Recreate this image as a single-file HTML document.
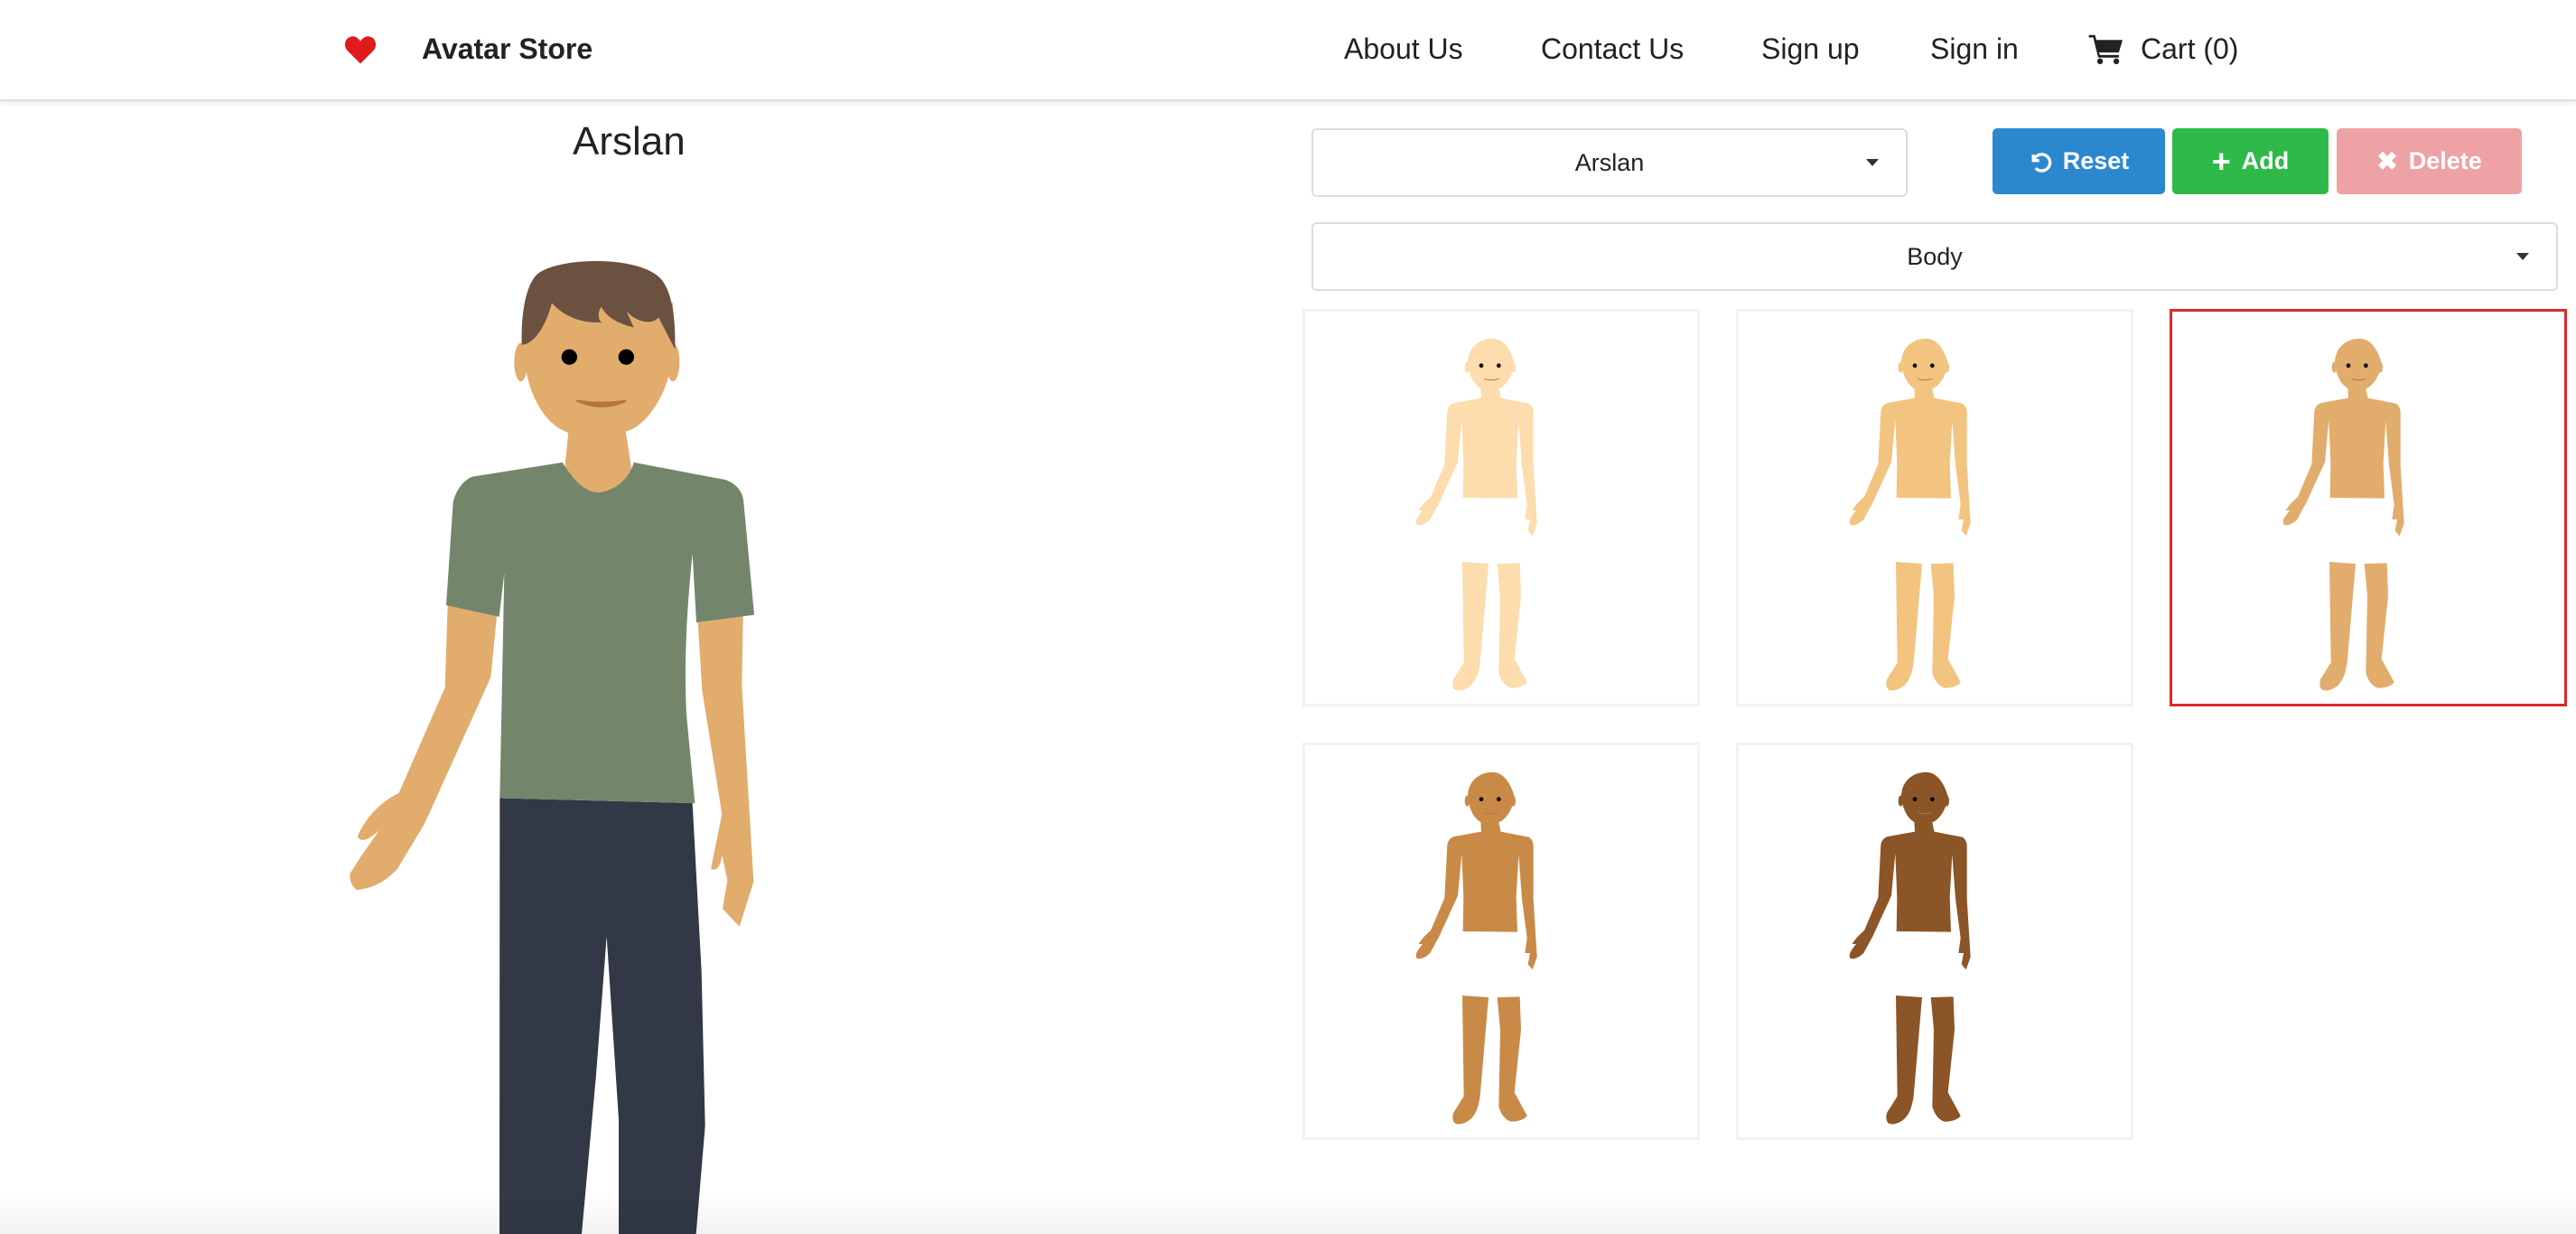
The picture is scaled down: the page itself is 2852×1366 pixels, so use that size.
<!DOCTYPE html>
<html><head><meta charset="utf-8"><style>
*{margin:0;padding:0;box-sizing:border-box}
body{width:2852px;height:1366px;overflow:hidden;background:#fff;font-family:"Liberation Sans",sans-serif;color:#222;position:relative}
.nav{position:absolute;left:0;top:0;width:2852px;height:112px;background:#fff;border-bottom:2px solid #ddd;box-shadow:0 3px 6px rgba(0,0,0,.08)}
.t{position:absolute;white-space:nowrap}
.nl{font-size:32px;top:36px;color:#222}
.sel{position:absolute;border:2px solid #ddd;border-radius:6px;background:#fff;font-size:27px;text-align:center;color:#222}
.caret{position:absolute;width:0;height:0;border-left:7px solid transparent;border-right:7px solid transparent;border-top:8px solid #333}
.btn{position:absolute;top:142px;height:73px;border-radius:5px;color:#fff;font-weight:bold;font-size:27px;display:flex;align-items:center;justify-content:center;gap:12px}
.card{position:absolute;width:440px;height:440px;border:3px solid #f2f2f2}
.fig{position:absolute;width:440px;height:440px}
</style></head><body>
<div class="nav"></div>
<svg class="t" style="left:380px;top:38px" width="38" height="34" viewBox="0 0 24 22"><path d="M12 21 L2.5 11.5 C-0.5 8 1 2 6 1.5 C9 1.3 11 3.5 12 5 C13 3.5 15 1.3 18 1.5 C23 2 24.5 8 21.5 11.5 Z" fill="#e01b1b"/></svg>
<div class="t" style="left:467px;top:36px;font-size:32px;font-weight:bold">Avatar Store</div>
<div class="t nl" style="left:1488px">About Us</div>
<div class="t nl" style="left:1706px">Contact Us</div>
<div class="t nl" style="left:1950px">Sign up</div>
<div class="t nl" style="left:2137px">Sign in</div>
<svg class="t" style="left:2312px;top:36px" width="40" height="36" viewBox="0 0 28 26"><path d="M0 2 H5 L6 6 H27 L24 16 H8 L9 18 H24 V20 H7.5 L3.5 4 H0 Z" fill="#222"/><circle cx="9" cy="23" r="2.3" fill="#222"/><circle cx="22" cy="23" r="2.3" fill="#222"/></svg>
<div class="t nl" style="left:2370px">Cart (0)</div>

<div class="t" style="left:634px;top:132px;font-size:44px;color:#222">Arslan</div>

<div class="sel" style="left:1452px;top:142px;width:660px;height:76px;line-height:72px">Arslan<div class="caret" style="right:30px;top:32px"></div></div>
<div class="btn" style="left:2206px;width:191px;background:#2b88cf"><svg width="26" height="26" viewBox="0 0 20 20"><path d="M4 4 V9 H9" fill="none" stroke="#fff" stroke-width="2.6"/><path d="M4.5 8.5 A7 7 0 1 1 6 15.5" fill="none" stroke="#fff" stroke-width="2.6"/></svg>Reset</div>
<div class="btn" style="left:2405px;width:173px;background:#2fb94b"><span style="font-size:36px">+</span>Add</div>
<div class="btn" style="left:2587px;width:205px;background:#eea2a5"><span style="font-size:28px">✖</span>Delete</div>
<div class="sel" style="left:1452px;top:246px;width:1380px;height:76px;line-height:72px">Body<div class="caret" style="right:30px;top:32px"></div></div>

<svg class="t" style="left:350px;top:250px" width="520" height="1116" viewBox="0 0 1560 1568" preserveAspectRatio="none">
<path d="M610,890 L1250,898 L1280,1160 L1292,1400 L1262,1568 L1005,1568 L1005,1390 L965,1105 L930,1320 L882,1568 L609,1568 Z" fill="#323845"/>
<path d="M437,590 L428,718 L275,882 C220,895 170,915 137,950 C150,960 175,955 210,940 L150,980 L112,1008 C110,1020 125,1030 135,1033 C190,1030 230,1020 270,1000 L360,930 L580,702 L600,607 Z" fill="#e1ac6c"/>
<path d="M1268,617 L1282,722 L1348,915 L1311,1000 C1330,1005 1345,995 1348,978 L1366,1018 L1350,1062 L1406,1090 L1453,1020 L1414,715 L1418,607 Z" fill="#e1ac6c"/>
<path d="M840,310 L815,430 L1065,430 L1025,310 Z" fill="#e1ac6c"/>
<path d="M455,430 C465,410 490,395 520,390 L818,368 C860,400 900,415 940,415 C990,412 1040,395 1055,368 L1360,395 C1400,402 1418,415 1420,430 L1455,605 L1263,617 L1250,510 C1230,600 1222,680 1230,760 L1258,898 L610,890 L625,540 L608,608 L432,590 Z" fill="#73866b"/>
<ellipse cx="680" cy="212" rx="22" ry="30" fill="#e1ac6c"/><ellipse cx="1185" cy="212" rx="22" ry="30" fill="#e1ac6c"/>
<path d="M688,180 C690,260 760,310 840,322 L1025,320 C1090,315 1150,270 1170,235 L1190,190 L1185,120 C1100,100 900,95 700,130 Z" fill="#e1ac6c"/>
<path d="M683,185 C680,130 700,90 735,75 C800,50 1050,45 1135,78 C1180,95 1195,140 1192,192 L1137,142 C1120,155 1060,150 1030,132 L1055,158 C1000,152 960,140 948,126 C935,132 935,148 950,150 C880,152 820,140 783,120 C760,160 720,185 683,185 Z" fill="#6a5140"/>
<ellipse cx="841" cy="204" rx="26" ry="12" fill="#000"/><ellipse cx="1030" cy="204" rx="26" ry="12" fill="#000"/>
<path d="M865,272 Q950,290 1030,272 Q950,278 865,272 Z" fill="#b57440" stroke="#b57440" stroke-width="3"/>
</svg>

<svg width="0" height="0" style="position:absolute"><defs>
<g id="b">
<ellipse cx="553" cy="200" rx="8" ry="18"/><ellipse cx="706" cy="200" rx="8" ry="18"/>
<path d="M555,185 C555,130 600,100 645,105 C680,110 700,150 710,185 C705,230 680,262 660,270 L598,270 C580,260 560,235 555,185 Z"/>
<path d="M598,265 L600,304 L665,304 L657,265 Z"/>
<path d="M510,318 L600,302 L665,302 L758,320 C770,328 773,340 773,350 L773,525 L785,718 L770,760 L755,742 L762,705 L745,705 L752,655 L735,525 L724,378 L716,520 L720,635 L539,633 L541,520 L535,375 L522,515 L460,650 L430,705 C415,720 395,728 385,722 C380,710 385,700 405,675 L392,675 C400,660 415,645 432,630 L478,522 L487,345 C490,330 498,322 510,318 Z"/>
<path d="M537,846 L624,852 L596,1180 C590,1220 580,1245 560,1260 C540,1275 515,1278 508,1265 C502,1250 506,1235 512,1228 L542,1180 Z"/>
<path d="M653,852 L728,850 L732,960 L710,1168 L752,1245 C745,1258 720,1265 700,1265 C680,1260 665,1240 658,1215 L663,960 Z"/>
</g>
<g id="f"><circle cx="600" cy="194" r="7" fill="#000"/><circle cx="658" cy="194" r="7" fill="#000"/><path d="M610,238 Q633,246 658,238" fill="none" stroke="#b57440" stroke-width="3"/></g>
</defs></svg>

<div class="card" style="left:1442px;top:342px"></div>
<div class="card" style="left:1922px;top:342px"></div>
<div class="card" style="left:2402px;top:342px;border-color:#d92a2e"></div>
<div class="card" style="left:1442px;top:822px"></div>
<div class="card" style="left:1922px;top:822px"></div>

<svg class="fig" style="left:1440px;top:340px" viewBox="0 0 1320 1320"><use href="#b" fill="#fddcad"/><use href="#f"/></svg>
<svg class="fig" style="left:1920px;top:340px" viewBox="0 0 1320 1320"><use href="#b" fill="#f2c47f"/><use href="#f"/></svg>
<svg class="fig" style="left:2400px;top:340px" viewBox="0 0 1320 1320"><use href="#b" fill="#e1ac6c"/><use href="#f"/></svg>
<svg class="fig" style="left:1440px;top:820px" viewBox="0 0 1320 1320"><use href="#b" fill="#c98a47"/><use href="#f"/></svg>
<svg class="fig" style="left:1920px;top:820px" viewBox="0 0 1320 1320"><use href="#b" fill="#8c5527"/><use href="#f"/></svg>

<div style="position:absolute;left:0;top:1320px;width:2852px;height:46px;background:linear-gradient(rgba(0,0,0,0),rgba(0,0,0,.05))"></div>
</body></html>
